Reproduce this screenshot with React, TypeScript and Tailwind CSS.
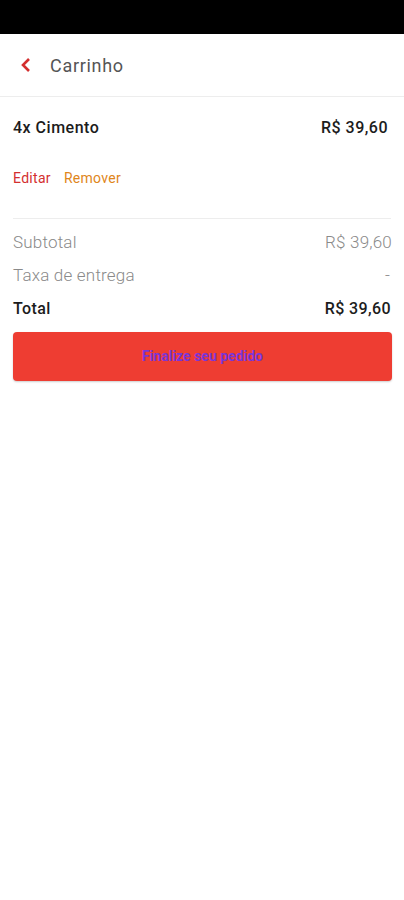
export default function App() {
  return (
    <div className="min-h-[900px] bg-white" style={{ fontFamily: 'Roboto, "Noto Sans", sans-serif' }}>
      <div className="h-[34px] bg-black" />
      <header className="flex h-[63px] items-center border-b border-[#ededed] pl-[20px]">
        <svg width="12" height="16" viewBox="0 0 12 16" className="text-[#d32f2f]">
          <path d="M9 2 L3 8 L9 14" fill="none" stroke="currentColor" strokeWidth="2.6" strokeLinejoin="miter" />
        </svg>
        <span className="ml-[18px] text-[18px] tracking-[0.7px] text-[#555555]">Carrinho</span>
      </header>

      <div className="px-[13px]">
        <div className="flex items-center justify-between pt-[21px]">
          <span className="text-[16px] font-medium leading-5 tracking-[0.5px] text-[#1c1c1c]">4x Cimento</span>
          <span className="mr-[3px] text-[16px] font-medium leading-5 tracking-[0.5px] text-[#1c1c1c]">R$ 39,60</span>
        </div>
        <div className="mt-[31px] flex gap-[13px] text-[14px] leading-[18px] tracking-[0.3px]">
          <span className="text-[#d32f2f]">Editar</span>
          <span className="text-[#e0861a]">Remover</span>
        </div>
        <div className="mt-[31px] border-t border-[#ededed]" />

        <div className="mt-[13px] flex flex-col gap-[13px] text-[17px] leading-5 tracking-[0.2px]">
          <div className="flex justify-between font-light text-[#8a8a8a]">
            <span>Subtotal</span>
            <span className="mr-[-1px]">R$ 39,60</span>
          </div>
          <div className="flex justify-between font-light text-[#8a8a8a]">
            <span>Taxa de entrega</span>
            <span className="mr-[1px]">-</span>
          </div>
          <div className="mt-[1px] flex justify-between text-[16px] font-medium tracking-[0.4px] text-[#1c1c1c]">
            <span>Total</span>
            <span>R$ 39,60</span>
          </div>
        </div>

        <button className="mt-[13px] flex h-[49px] w-[379px] items-center justify-center rounded-[4px] bg-[#ee3d32] text-[14px] font-bold text-[#7a35d8] shadow-[0_1px_2px_rgba(0,0,0,0.2)]">
          Finalize seu pedido
        </button>
      </div>
    </div>
  );
}
